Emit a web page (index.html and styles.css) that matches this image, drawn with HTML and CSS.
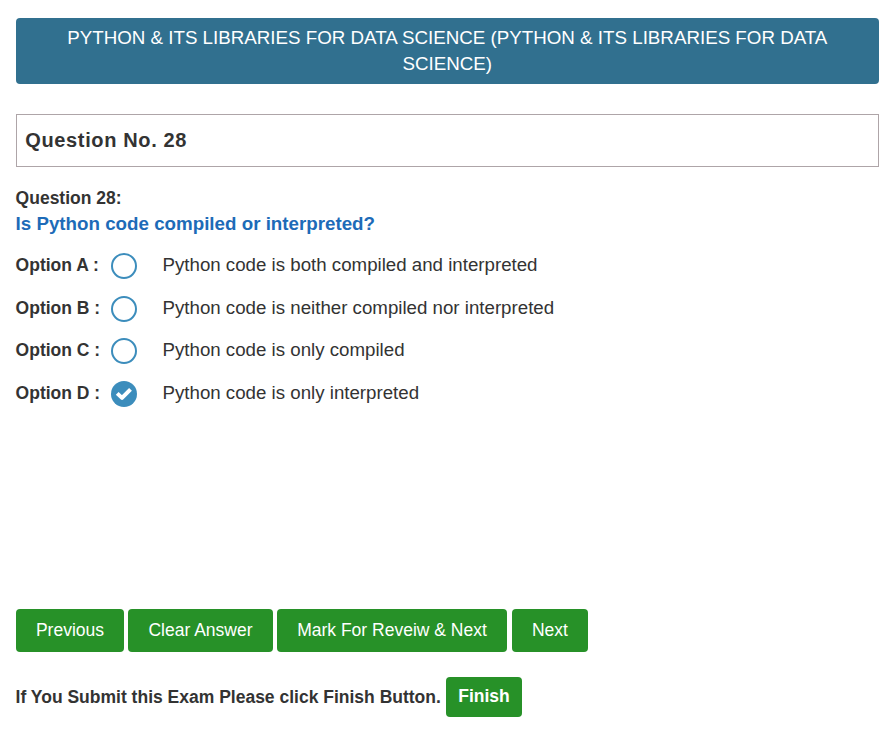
FILE: index.html
```html
<!DOCTYPE html>
<html lang="en">
<head>
<meta charset="utf-8">
<title>Python Exam</title>
<link rel="stylesheet" href="styles.css">
</head>
<body>
<header class="banner">PYTHON &amp; ITS LIBRARIES FOR DATA SCIENCE (PYTHON &amp; ITS LIBRARIES FOR DATA SCIENCE)</header>
<div class="number"><span>Question No. 28</span></div>
<main>
<div class="label"><span>Question 28:</span></div>
<div class="question"><span>Is Python code compiled or interpreted?</span></div>
<div class="options">
<div class="option"><b>Option A :</b><i class="radio"></i><span class="a">Python code is both compiled and interpreted</span></div>
<div class="option"><b>Option B :</b><i class="radio"></i><span class="b">Python code is neither compiled nor interpreted</span></div>
<div class="option"><b>Option C :</b><i class="radio"></i><span class="c">Python code is only compiled</span></div>
<div class="option"><b>Option D :</b><i class="radio checked"><svg viewBox="0 0 26 26"><path d="M6.2 12.4 11 16.9 19.5 8.3" fill="none" stroke="#fff" stroke-width="4" stroke-linejoin="round"/></svg></i><span class="d">Python code is only interpreted</span></div>
</div>
</main>
<nav class="actions">
<button class="prev">Previous</button><button class="clear">Clear Answer</button><button class="mark">Mark For Reveiw &amp; Next</button><button class="next">Next</button>
</nav>
<footer class="submit"><span>If You Submit this Exam Please click Finish Button.</span><button class="finish">Finish</button></footer>
</body>
</html>
```
FILE: styles.css
```css
* { box-sizing: border-box; }
body { margin: 0; padding: 18px 12px 0 15.6px; background: #fff; color: #333; font-family: "Liberation Sans", Arial, sans-serif; }
.banner { height: 66px; padding: 7px 40px; border-radius: 4px; background: #31708f; color: #fff; font-size: 18.75px; line-height: 26px; text-align: center; }
.number { height: 53px; margin-top: 30px; padding-left: 8.7px; border: 1px solid #aea5a8; font-size: 20px; font-weight: bold; line-height: 50px; letter-spacing: .64px; }
main { height: 442px; padding-top: 18px; }
.label { height: 26px; font-size: 17.5px; line-height: 26px; font-weight: bold; }
.question { height: 26px; color: #1d6bb8; font-size: 18.75px; line-height: 25px; font-weight: bold; }
.options { padding-top: 15px; }
.option { display: flex; height: 42.6px; font-size: 18.7px; line-height: 26px; }
.option b { width: 95.4px; font-size: 17.5px; white-space: nowrap; }
.radio { width: 26px; height: 26px; margin: 1.3px 25.5px 0 0; border: 2px solid #3c8dbc; border-radius: 50%; }
.checked { border: 0; background: #3c8dbc; }
.radio svg { display: block; }
.actions { display: flex; gap: 4px; margin-left: .4px; }
button { padding: 0; border: 0; border-radius: 4px; background: #279128; color: #fff; font: 17.5px "Liberation Sans", Arial, sans-serif; white-space: nowrap; }
.actions button { height: 43px; }
.prev { width: 108px; }
.clear { width: 145px; }
.mark { width: 230px; }
.next { width: 76px; margin-left: 1px; }
.submit { display: flex; margin-top: 25px; font-size: 17.5px; font-weight: bold; line-height: 40px; white-space: nowrap; }
.submit span { width: 430.4px; }
.finish { width: 76px; height: 40px; padding-bottom: 2px; font-weight: bold; }
```
